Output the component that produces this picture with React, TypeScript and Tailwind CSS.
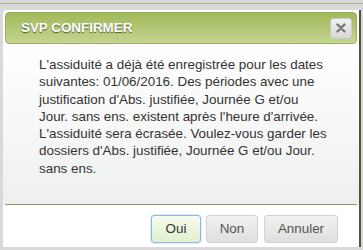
import React from "react";

const FONT = { fontFamily: '"Liberation Sans", Arial, sans-serif' };

function DialogButton({ label, primary = false }: { label: string; primary?: boolean }) {
  return (
    <button
      type="button"
      className={
        primary
          ? "h-[28px] w-full rounded-[3px] border border-[#8cb4ec] bg-gradient-to-b from-[#f6fbee] to-[#e2f0cc] text-[13.4px] text-[#333] shadow-[0_0_2px_rgba(100,150,230,0.6)]"
          : "h-[28px] w-full rounded-[3px] border border-[#d2d2d2] bg-gradient-to-b from-[#f2f2f2] to-[#dedede] text-[13.4px] text-[#555]"
      }
    >
      {label}
    </button>
  );
}

export default function App() {
  return (
    <div className="relative h-[250px] w-[363px] overflow-hidden bg-[#d9d9d9]" style={FONT}>
      <div className="mt-[3px] h-px bg-[#a7b18a]" />
      <div className="ml-[3px] mt-[6px] flex h-[237px] w-[358px] flex-col rounded-tl-[4px] border-r-2 border-[#4d5630] bg-white">
        <div className="mx-[2px] mt-[2px] flex h-[32px] items-center justify-between rounded-[4px] border border-[#98ad62] bg-gradient-to-b from-[#a1b958] to-[#c4d590] pl-[15px] pr-[4px]">
          <span className="text-[13.4px] font-bold text-white [text-shadow:0_1px_1px_rgba(0,0,0,0.55)]">
            SVP CONFIRMER
          </span>
          <button
            type="button"
            className="flex h-[21px] w-[22px] items-center justify-center rounded-[3px] border border-[#c8c8c8] bg-gradient-to-b from-[#f2f2f2] to-[#d6d6d6]"
          >
            <svg width="10" height="10" viewBox="0 0 10 10">
              <path d="M1.5 1.5 L8.5 8.5 M8.5 1.5 L1.5 8.5" stroke="#777" strokeWidth="2.4" strokeLinecap="round" />
            </svg>
          </button>
        </div>
        <div className="flex-1 bg-gradient-to-b from-white to-[#eef0ef] pl-[36px] pt-[12px]">
          <p className="w-[288px] text-[13.4px] leading-[17.3px] text-[#333]">
            L'assiduité a déjà été enregistrée pour les dates suivantes: 01/06/2016. Des périodes avec une
            justification d'Abs. justifiée, Journée G et/ou Jour. sans ens. existent après l'heure d'arrivée.
            L'assiduité sera écrasée. Voulez-vous garder les dossiers d'Abs. justifiée, Journée G et/ou Jour.
            sans ens.
          </p>
        </div>
        <div className="mx-[2px] h-px bg-[#8b9a5c]" />
        <div className="flex h-[42px] items-start justify-end gap-[5px] pr-[21px] pt-[10px]">
          <div className="w-[50px]">
            <DialogButton label="Oui" primary />
          </div>
          <div className="w-[52px]">
            <DialogButton label="Non" />
          </div>
          <div className="ml-[1px] w-[74px]">
            <DialogButton label="Annuler" />
          </div>
        </div>
      </div>
    </div>
  );
}
